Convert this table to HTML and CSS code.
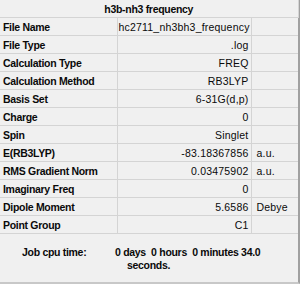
FILE: index.html
```html
<!DOCTYPE html>
<html lang="en">
<head>
  <meta charset="UTF-8">
  <title>h3b-nh3 frequency</title>
  <link rel="stylesheet" href="styles.css">
</head>
<body>

<div class="panel">
  <table class="summary">
    <colgroup>
      <col class="col-key">
      <col class="col-val">
      <col class="col-unit">
    </colgroup>
    <tr class="title-row"><th colspan="3">h3b-nh3 frequency</th></tr>
    <tr><th>File Name</th><td class="val">hc2711_nh3bh3_frequency</td><td class="unit"></td></tr>
    <tr><th>File Type</th><td class="val">.log</td><td class="unit"></td></tr>
    <tr><th>Calculation Type</th><td class="val">FREQ</td><td class="unit"></td></tr>
    <tr><th>Calculation Method</th><td class="val">RB3LYP</td><td class="unit"></td></tr>
    <tr><th>Basis Set</th><td class="val">6-31G(d,p)</td><td class="unit"></td></tr>
    <tr><th>Charge</th><td class="val">0</td><td class="unit"></td></tr>
    <tr><th>Spin</th><td class="val">Singlet</td><td class="unit"></td></tr>
    <tr><th>E(RB3LYP)</th><td class="val">-83.18367856</td><td class="unit">a.u.</td></tr>
    <tr><th>RMS Gradient Norm</th><td class="val">0.03475902</td><td class="unit">a.u.</td></tr>
    <tr><th>Imaginary Freq</th><td class="val">0</td><td class="unit"></td></tr>
    <tr><th>Dipole Moment</th><td class="val">5.6586</td><td class="unit">Debye</td></tr>
    <tr><th>Point Group</th><td class="val">C1</td><td class="unit"></td></tr>
  </table>

  <div class="cpu">
    <span class="cpu-label">Job cpu time:</span>
    <span class="cpu-value">
      <span class="line">0 days&nbsp; 0 hours&nbsp; 0 minutes 34.0</span>
      <span class="line wrap">seconds.</span>
    </span>
  </div>
</div>

</body>
</html>
```

FILE: styles.css
```css
/* Job summary dialog */
body {
  margin: 0;
  background: #f0f0f0;
  font-family: 'Liberation Sans', Arial, sans-serif;
  font-size: 10.5px;
  letter-spacing: -0.3px;
  color: #0a0a0a;
}
.panel {
  width: 300px;
  height: 284px;
  box-sizing: border-box;
  border-right: 2px solid #a0a0a0;
  border-bottom: 2px solid #c8c8c8;
  display: flex;
  flex-direction: column;
}
.summary {
  width: 298px;
  border-collapse: collapse;
  table-layout: fixed;
}
.col-key { width: 117px; }
.col-val { width: 134px; }
.col-unit { width: 47px; }
.summary th,
.summary td {
  height: 17px;
  padding: 0 3px;
  border: 1px solid #d4d4d4;
  white-space: nowrap;
  overflow: hidden;
}
.summary td {
  letter-spacing: 0.2px;
}
.summary tr:first-child th {
  border-top: none;
}
.summary th:first-child,
.summary td:first-child {
  border-left: none;
}
.summary td.unit {
  border-right: none;
  padding-left: 5px;
}
.summary th {
  text-align: left;
  font-weight: bold;
}
.summary .title-row th {
  text-align: center;
}
.summary .val {
  text-align: right;
  padding-left: 1px;
  padding-right: 2px;
}
.cpu {
  display: flex;
  padding: 12px 0 0 22px;
  font-weight: bold;
  line-height: 13px;
}
.cpu-label {
  width: 93px;
}
.cpu-value {
  display: flex;
  flex-direction: column;
}
.wrap {
  padding-left: 12px;
}
```
